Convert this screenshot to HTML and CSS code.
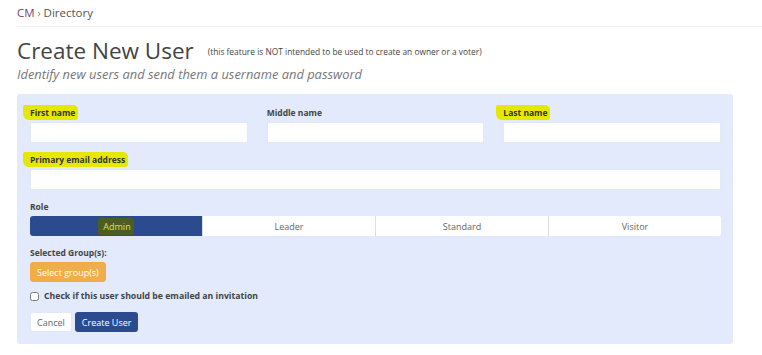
FILE: index.html
```html
<!DOCTYPE html>
<html lang="en">
<head>
  <meta charset="UTF-8">
  <title>Create New User</title>
  <link rel="stylesheet" href="styles.css">
</head>
<body>
  <div class="breadcrumb">
    <a class="crumb-root" href="#">CM</a> <span class="sep">›</span> <span>Directory</span>
  </div>

  <div class="page">
    <div class="page-header">
      <h1>Create New User <small>(this feature is NOT intended to be used to create an owner or a voter)</small></h1>
      <p class="lead">Identify new users and send them a username and password</p>
    </div>

    <form class="panel">
      <div class="row three">
        <div class="field">
          <label><span class="hl">First name</span></label>
          <input type="text">
        </div>
        <div class="field">
          <label>Middle name</label>
          <input type="text">
        </div>
        <div class="field">
          <label><span class="hl">Last name</span></label>
          <input type="text">
        </div>
      </div>

      <div class="field">
        <label><span class="hl">Primary email address</span></label>
        <input type="email">
      </div>

      <div class="field">
        <label>Role</label>
        <div class="segments">
          <button type="button" class="seg active"><span class="hl-dark">Admin</span></button>
          <button type="button" class="seg">Leader</button>
          <button type="button" class="seg">Standard</button>
          <button type="button" class="seg">Visitor</button>
        </div>
      </div>

      <div class="field">
        <label>Selected Group(s):</label>
        <button type="button" class="btn btn-warning">Select group(s)</button>
      </div>

      <label class="check">
        <input type="checkbox"> Check if this user should be emailed an invitation
      </label>

      <div class="actions">
        <button type="button" class="btn btn-default">Cancel</button>
        <button type="submit" class="btn btn-primary">Create User</button>
      </div>
    </form>
  </div>
</body>
</html>
```

FILE: styles.css
```css
/* Reset */
body, h1, p {
  margin: 0;
  padding: 0;
}

body {
  font-family: 'Open Sans', 'Liberation Sans', sans-serif;
  background: #fff;
  color: #333;
}

/* Breadcrumb */
.breadcrumb {
  margin: 0 0 0 17px;
  padding: 5px 0 5px;
  font-size: 11.5px;
  line-height: 16px;
  color: #555;
  border-bottom: 1px solid #f2f2f2;
}

.crumb-root {
  color: #7b3f72;
  text-decoration: none;
}

.sep {
  color: #777;
  font-size: 10px;
}

/* Page */
.page {
  width: 716px;
  margin-left: 17px;
}

.page-header {
  padding-top: 10px;
}

h1 {
  font-size: 22.5px;
  font-weight: 400;
  line-height: 28px;
  color: #444;
}

h1 small {
  font-size: 8.4px;
  color: #444;
  margin-left: 8px;
  vertical-align: 4px;
}

.lead {
  font-size: 12.9px;
  font-style: italic;
  color: #777;
  line-height: 16px;
}

/* Form panel */
.panel {
  margin-top: 12px;
  background: #e2eafc;
  border-radius: 3px;
  padding: 13px 12px 12px 13px;
}

.row.three {
  display: grid;
  grid-template-columns: 1fr 1fr 1fr;
  column-gap: 19px;
}

.field {
  margin-bottom: 11px;
}

.field label {
  display: block;
  font-size: 8.5px;
  font-weight: 700;
  color: #444;
  line-height: 12px;
  margin-bottom: 3px;
}

.hl {
  background: #e5e800;
  color: #333;
  padding: 2px 3px 2px 7px;
  margin-left: -7px;
  border-radius: 2px 5px 3px 6px;
}

.field input {
  display: block;
  box-sizing: border-box;
  width: 100%;
  height: 21px;
  border: 1px solid #e4e8f0;
  border-radius: 2px;
  background: #fff;
}

/* Role selector */
.segments {
  display: flex;
  height: 20px;
  border-radius: 3px;
  overflow: hidden;
  background: #fff;
}

.seg {
  flex: 1;
  border: none;
  border-left: 1px solid #dcdcdc;
  background: #fff;
  font-family: inherit;
  font-size: 9px;
  color: #666;
  padding: 0;
}

.seg:first-child {
  border-left: none;
}

.seg.active {
  background: #2c4a8e;
  color: #dbe34d;
}

.hl-dark {
  background: #4c5c23;
  padding: 2px 3px 2px 5px;
  border-radius: 3px;
}

/* Buttons */
.btn {
  display: block;
  font-family: inherit;
  font-size: 9px;
  height: 20px;
  padding: 0 6px;
  border-radius: 3px;
  border: 1px solid transparent;
  cursor: pointer;
}

.btn-warning {
  background: #f0ae4a;
  color: #fff;
  border-color: #eeaa44;
}

.btn-default {
  background: #fff;
  color: #666;
  border-color: #e4e8f0;
}

.btn-primary {
  background: #2c4a8e;
  color: #fff;
}

/* Checkbox */
.check {
  display: flex;
  align-items: center;
  font-size: 8.7px;
  font-weight: 700;
  color: #444;
  line-height: 12px;
  margin-top: -3px;
}

.check input {
  width: 9px;
  height: 9px;
  margin: 0 5px 0 0;
}

.actions {
  display: flex;
  gap: 3px;
  margin-top: 10px;
}
```
